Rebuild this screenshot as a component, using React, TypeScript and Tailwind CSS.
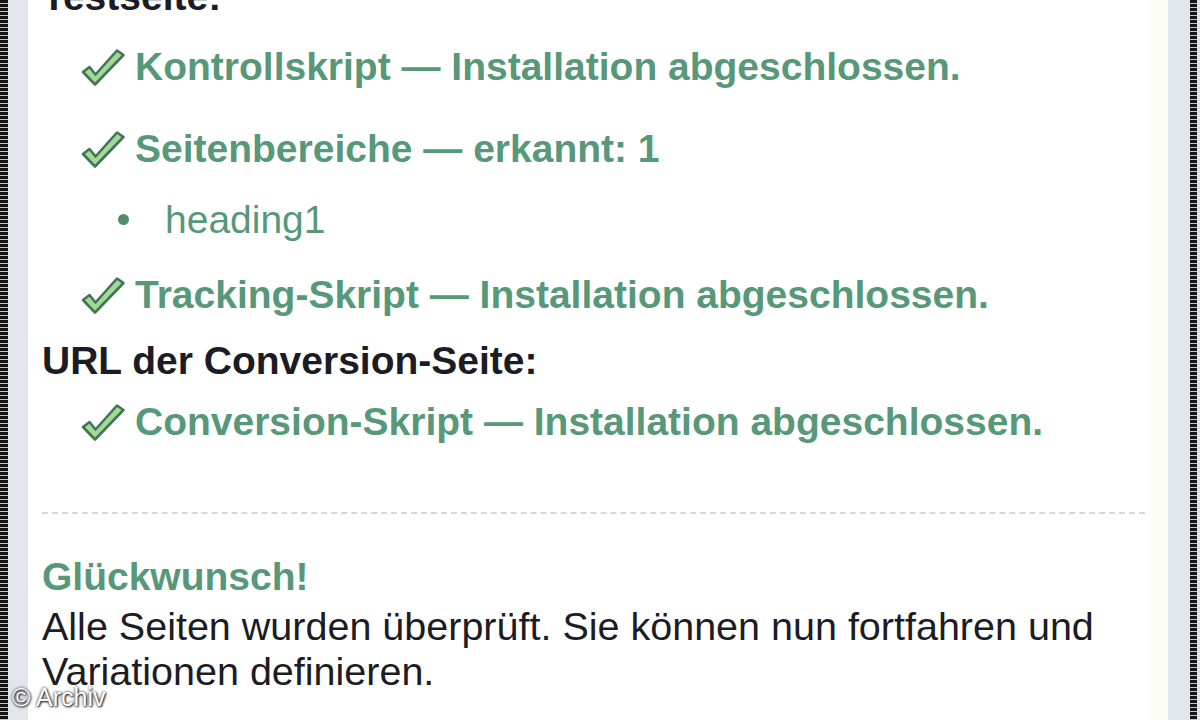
import React from "react"

const green = "text-[#579879]"

function Check() {
  return (
    <svg width="46" height="40" viewBox="0 0 46 40" className="shrink-0">
      <path
        d="M3 25 L9.5 20 L15.5 27.5 L37 3.5 L43.5 8 L15 37.5 Z"
        fill="#9fdc92"
        stroke="#46725c"
        strokeWidth="2.6"
        strokeLinejoin="round"
      />
    </svg>
  )
}

function CheckRow({ label, extra, className = "" }: { label: string; extra: string; className?: string }) {
  return (
    <div className={`flex items-center gap-[9px] pl-[38px] h-[45px] ${className}`}>
      <Check />
      <span className={`font-bold ${green} whitespace-nowrap`}>
        {label} — {extra}
      </span>
    </div>
  )
}

export default function App() {
  return (
    <div className="relative flex h-[720px] w-[1200px] overflow-hidden bg-white font-['Liberation_Sans',Arial,sans-serif] text-[39px] leading-[45px] text-[#1c1c24]">
      <div className="w-[8px] shrink-0 bg-[repeating-linear-gradient(to_bottom,#141414_0px,#141414_3px,#bfc4c8_3px,#bfc4c8_4px)]" />
      <div className="w-[20px] shrink-0 bg-[#e1e6ec]" />

      <div className="flex-1 flex flex-col pl-[14px] pr-[3px]">
        <div className="-mt-[26px] font-bold whitespace-nowrap">Testseite:</div>

        <CheckRow label="Kontrollskript" extra="Installation abgeschlossen." className="mt-[25px]" />
        <CheckRow label="Seitenbereiche" extra="erkannt: 1" className="mt-[37px]" />

        <div className="mt-[26px] flex items-center h-[45px] pl-[76px]">
          <span className="w-[11px] h-[11px] rounded-full bg-[#4f8f6c] mr-[36px]" />
          <span className={green}>heading1</span>
        </div>

        <CheckRow label="Tracking-Skript" extra="Installation abgeschlossen." className="mt-[30px]" />

        <div className="mt-[21px] font-bold whitespace-nowrap">URL der Conversion-Seite:</div>

        <CheckRow label="Conversion-Skript" extra="Installation abgeschlossen." className="mt-[16px]" />

        <div className="mt-[68px] border-t-2 border-dashed border-[#d6d8d6]" />

        <div className={`mt-[40px] font-bold ${green}`}>Glückwunsch!</div>
        <div className="mt-[5px] text-[39.5px]">
          Alle Seiten wurden überprüft. Sie können nun fortfahren und
          <br />
          Variationen definieren.
        </div>
      </div>

      <div className="w-[20px] shrink-0 bg-[#fbfdf6]" />
      <div className="w-[22px] shrink-0 bg-[#e1e6ec]" />
      <div className="w-[7px] shrink-0 bg-[repeating-linear-gradient(to_bottom,#141414_0px,#141414_3px,#bfc4c8_3px,#bfc4c8_4px)]" />
      <div className="w-[3px] shrink-0 bg-[#e1e6ec]" />

      <div className="absolute left-[12px] top-[682px] text-[25px] leading-[30px] text-white [text-shadow:0_0_3px_rgba(0,0,0,0.9),1px_1px_2px_rgba(0,0,0,0.8)]">
        © Archiv
      </div>
    </div>
  )
}
